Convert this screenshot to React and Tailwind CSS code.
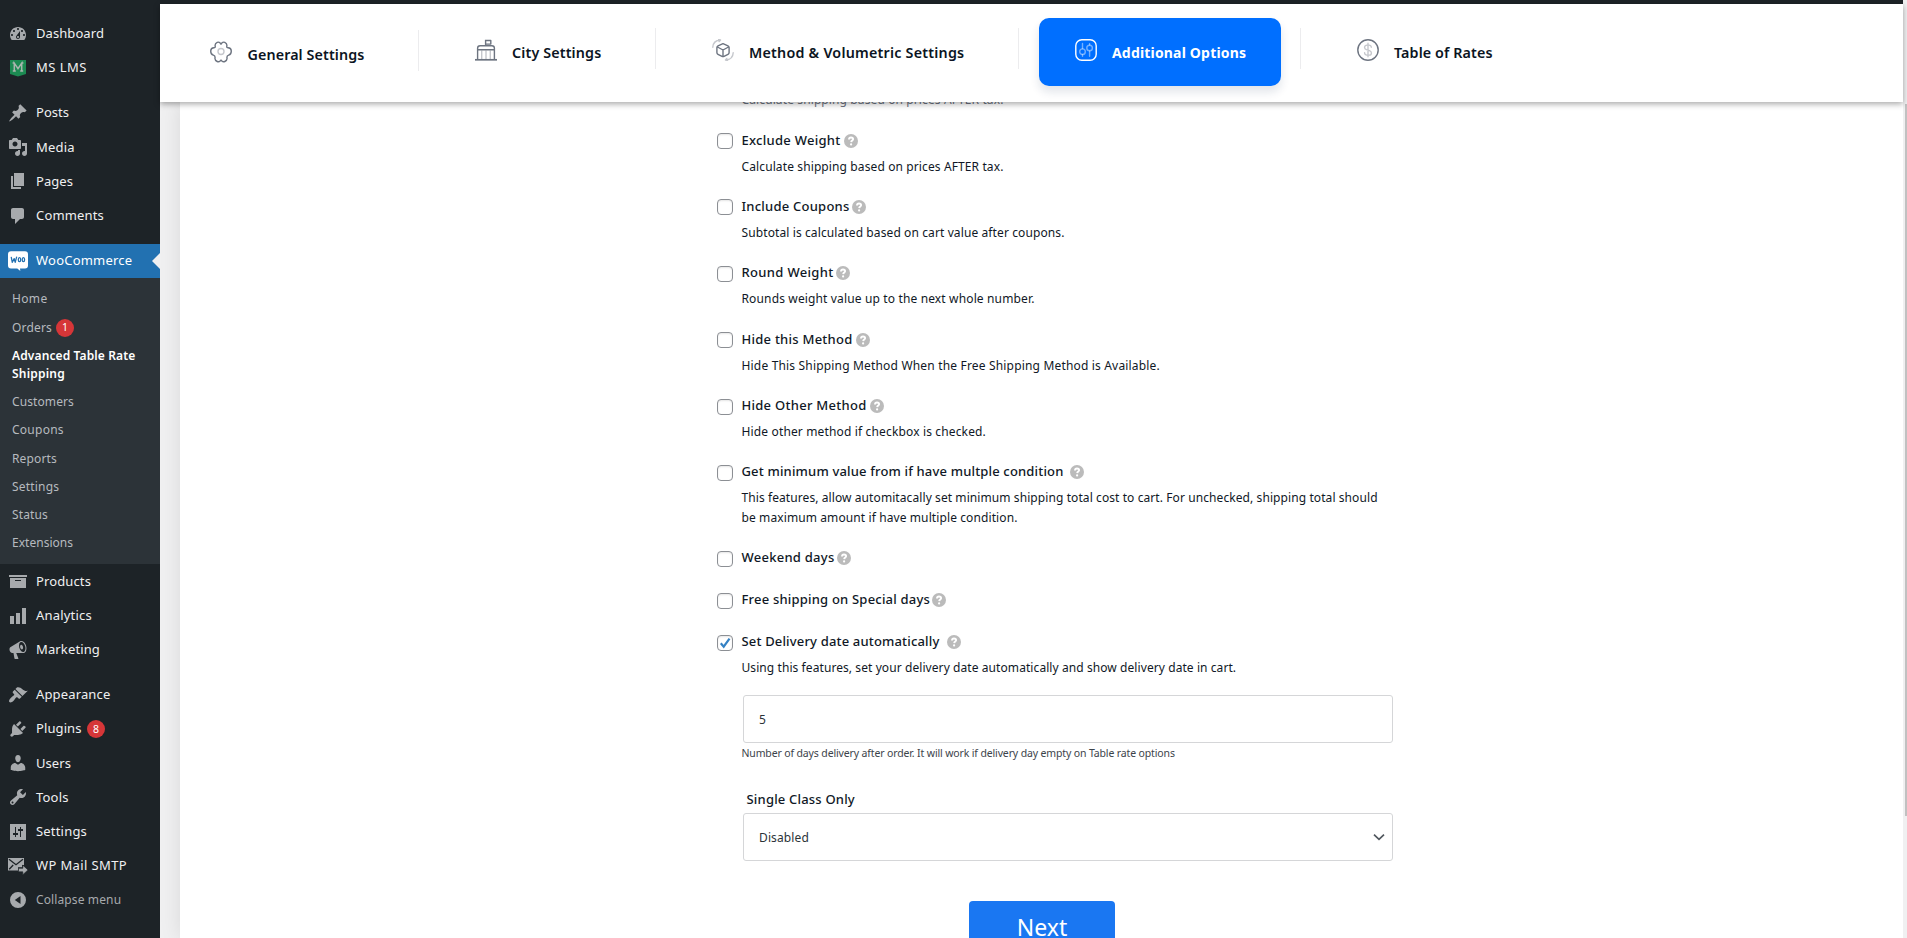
import React from "react";

const ICONS = {
  dashboard: "M3.76 16h12.48c1.1-1.37 1.76-3.11 1.76-5 0-4.42-3.58-8-8-8s-8 3.58-8 8c0 1.89.66 3.63 1.76 5zM10 4c.55 0 1 .45 1 1s-.45 1-1 1-1-.45-1-1 .45-1 1-1zM6 6c.55 0 1 .45 1 1s-.45 1-1 1-1-.45-1-1 .45-1 1-1zm8 0c.55 0 1 .45 1 1s-.45 1-1 1-1-.45-1-1 .45-1 1-1zm-5.37 5.55L12 7v6c0 1.1-.9 2-2 2s-2-.9-2-2c0-.57.24-1.08.63-1.45zM4 10c.55 0 1 .45 1 1s-.45 1-1 1-1-.45-1-1 .45-1 1-1zm12 0c.55 0 1 .45 1 1s-.45 1-1 1-1-.45-1-1 .45-1 1-1zm-5 3c0-.55-.45-1-1-1s-1 .45-1 1 .45 1 1 1 1-.45 1-1z",
  post: "M10.44 3.02l1.82-1.82 6.36 6.35-1.83 1.82c-1.05-.68-2.48-.57-3.41.36l-.75.75c-.92.93-1.04 2.35-.35 3.41l-1.83 1.82-2.41-2.41-2.8 2.79c-.42.42-3.38 2.71-3.8 2.29s1.86-3.39 2.28-3.81l2.79-2.79L4.1 9.36l1.83-1.82c1.05.69 2.48.57 3.4-.36l.75-.75c.93-.92 1.05-2.35.36-3.41z",
  media: "M13 11V4c0-.55-.45-1-1-1h-1.67L9 1H5L3.67 3H2c-.55 0-1 .45-1 1v7c0 .55.45 1 1 1h10c.55 0 1-.45 1-1zM7 4.5c1.38 0 2.5 1.12 2.5 2.5S8.38 9.5 7 9.5 4.5 8.38 4.5 7 5.62 4.5 7 4.5zM14 6h5v10.5c0 1.38-1.12 2.5-2.5 2.5S14 17.88 14 16.5s1.12-2.5 2.5-2.5c.17 0 .34.02.5.05V9h-3V6zm-4 8.05V13h2v3.5c0 1.38-1.12 2.5-2.5 2.5S7 17.88 7 16.5 8.12 14 9.5 14c.17 0 .34.02.5.05z",
  page: "M6 15V2h10v13H6zm-1 1h8v2H3V5h2v11z",
  comments: "M5 2h9c1.1 0 2 .9 2 2v7c0 1.1-.9 2-2 2h-2l-5 5v-5H5c-1.1 0-2-.9-2-2V4c0-1.1.9-2 2-2z",
  archive: "M19 4v2H1V4h18zM2 7h16v10H2V7zm11 3V9H7v1h6z",
  chart: "M18 18V2h-4v16h4zm-6 0V7H8v11h4zm-6 0v-8H2v8h4z",
  megaphone: "M18.15 5.94c.46 1.62.38 3.22-.02 4.48-.42 1.28-1.26 2.18-2.3 2.48-.16.06-.26.06-.4.06-.06.02-.12.02-.18.02-.06.02-.14.02-.22.02h-6.8l2.22 5.5c.02.14-.06.26-.14.34-.08.1-.24.16-.34.16H6.95c-.1 0-.26-.06-.34-.16-.08-.08-.16-.2-.14-.34l-1-5.5H4.25l-.02-.02c-.5.06-1.08-.18-1.54-.62s-.88-1.08-1.06-1.88c-.24-.8-.2-1.56-.02-2.2.18-.62.58-1.08 1.06-1.3l.02-.02 9-5.4c.1-.06.18-.1.24-.16.06-.04.14-.08.24-.12.16-.08.28-.12.5-.18 1.04-.3 2.24.1 3.22.98s1.84 2.24 2.26 3.86zm-2.58 5.98h-.02c.4-.1.74-.34 1.04-.7.58-.7.86-1.76.86-3.04 0-.64-.1-1.3-.28-1.98-.34-1.36-1.02-2.5-1.78-3.24s-1.68-1.1-2.46-.88c-.82.22-1.4.96-1.7 2-.32 1.04-.28 2.36.06 3.72.38 1.36 1 2.5 1.8 3.24.78.74 1.62 1.1 2.48.88zm-2.54-7.08c.22-.04.42-.02.62.04.38.16.76.48 1.02 1s.42 1.2.42 1.78c0 .3-.04.56-.12.8-.18.48-.44.84-.86.94-.34.1-.8-.06-1.14-.4s-.64-.86-.78-1.5c-.18-.62-.12-1.24.02-1.72s.48-.84.82-.94z",
  appearance: "M14.48 11.06L7.41 3.99l1.5-1.5c.5-.56 2.3-.47 3.51.32 1.21.8 1.43 1.28 2.91 2.1 1.18.64 2.45 1.26 4.45.85zm-.71.71L6.7 4.7 4.93 6.47c-.39.39-.39 1.02 0 1.41l1.06 1.06c.39.39.39 1.03 0 1.42-.6.6-1.43 1.11-2.21 1.69-.35.26-.7.53-1.01.84C1.43 14.23.4 16.08 1.4 17.07c.99 1 2.84-.03 4.18-1.36.31-.31.58-.66.85-1.02.57-.78 1.08-1.61 1.69-2.21.39-.39 1.02-.39 1.41 0l1.06 1.06c.39.39 1.02.39 1.41 0z",
  plugins: "M13.11 4.36L9.87 7.6 8 5.73l3.24-3.24c.35-.34 1.05-.2 1.56.32.52.51.66 1.21.31 1.55zm-8 1.77l.91-1.12 9.01 9.01-1.19.84c-.71.71-2.63 1.16-3.82 1.16H6.14L4.9 17.26c-.59.59-1.54.59-2.12 0-.59-.58-.59-1.53 0-2.12l1.24-1.24v-3.88c0-1.13.4-3.19 1.09-3.89zm7.26 3.97l3.24-3.24c.34-.35 1.04-.21 1.55.31.52.51.66 1.21.31 1.55l-3.24 3.25z",
  users: "M10 9.25c-2.27 0-2.73-3.44-2.73-3.44C7 4.02 7.82 2 9.97 2c2.16 0 2.98 2.02 2.71 3.81 0 0-.41 3.44-2.68 3.44zm0 2.57L12.72 10c2.39 0 4.52 2.33 4.52 4.53v2.49s-3.65 1.13-7.24 1.13c-3.65 0-7.24-1.13-7.24-1.13v-2.49c0-2.25 1.94-4.48 4.47-4.48z",
  tools: "M16.68 9.77c-1.34 1.34-3.3 1.67-4.95.99l-5.41 6.52c-.99.99-2.59.99-3.58 0s-.99-2.59 0-3.57l6.52-5.42c-.68-1.65-.35-3.61.99-4.95 1.28-1.28 3.12-1.62 4.72-1.06l-2.89 2.89 2.82 2.82 2.86-2.87c.53 1.58.18 3.39-1.08 4.65zM3.81 16.21c.4.39 1.04.39 1.43 0 .4-.4.4-1.04 0-1.43-.39-.4-1.03-.4-1.43 0-.39.39-.39 1.03 0 1.43z",
  settings: "M2 2h16v16H2zM8 11V5H7v6H5v2h2v2h1v-2h2v-2zM15 7h-2V5h-1v2h-2v2h2v6h1V9h2z",
  collapse: "M10 2a8 8 0 1 0 0 16 8 8 0 0 0 0-16zM12.5 6v8L6.8 10z",
};

function Dashicon({ name }) {
  if (name === "mslms") {
    return (
      <svg className="size-5" viewBox="0 0 20 20">
        <path fill="#1c8a52" d="M2 2h16v14l-8 2.6L2 16z" />
        <path fill="none" stroke="#a9b5ae" strokeWidth="1.5" d="M6.3 13V5.2L10 10.6l3.7-5.4V13M4.6 5h2.2M13.2 5h2.2M4.8 13h3M12.2 13h3" />
      </svg>
    );
  }
  if (name === "woo") {
    return (
      <svg className="size-5" viewBox="0 0 20 20">
        <path fill="#fff" d="M3 .2h14a3 3 0 0 1 3 3v11.4a3 3 0 0 1-3 3h-5l.3 2.4-3-2.4H3a3 3 0 0 1-3-3V3.200a3 3 0 0 1 3-3z" />
        <path fill="none" stroke="#2271b1" strokeWidth="1.3" strokeLinecap="round" strokeLinejoin="round" d="M3.300 6.400l1 4.900 1.900-3.700 1 3.700L8.600 6.200" />
        <ellipse cx="11.500" cy="8.700" rx="1.200" ry="2" fill="none" stroke="#2271b1" strokeWidth="1.300" />
        <ellipse cx="15.400" cy="8.700" rx="1.200" ry="2" fill="none" stroke="#2271b1" strokeWidth="1.300" />
      </svg>
    );
  }
  if (name === "mail") {
    return (
      <svg className="size-5" viewBox="0 0 20 20">
        <path fill="#a7aaad" d="M0 2h16v7h-2v2.300h-4v3.200H0z" />
        <path fill="none" stroke="#1d2327" strokeWidth="1.300" d="M1 3.300l7 5.400 7-5.400M1.200 13.300l4-4.300" />
        <path fill="#a7aaad" stroke="#1d2327" strokeWidth=".6" d="M10.500 12.300h4.300V9.200l5.200 4.700-5.200 4.800v-2.900h-4.300z" />
      </svg>
    );
  }
  return (
    <svg className="size-5" viewBox="0 0 20 20">
      <path fill="#a7aaad" fillRule={name === "settings" || name === "collapse" ? "evenodd" : "nonzero"} d={ICONS[name]} />
    </svg>
  );
}

const TOP = [
  ["dashboard", "Dashboard", "tracking-[0.076px]"],
  ["mslms", "MS LMS", "tracking-[0.45px]"],
  null,
  ["post", "Posts", "tracking-[0.02px]"],
  ["media", "Media", "tracking-[0.2px]"],
  ["page", "Pages", "tracking-[0.05px]"],
  ["comments", "Comments", "tracking-[0.16px]"],
  null,
];
const SUB = [
  ["Customers", "tracking-[0.1px]"],
  ["Coupons", "tracking-[0.25px]"],
  ["Reports", "tracking-[0.15px]"],
  ["Settings", "tracking-[0.2px]"],
  ["Status", "tracking-[0.14px]"],
  ["Extensions", "tracking-[0.02px]"],
];
const BOTTOM = [
  ["archive", "Products", "tracking-[0.12px]"],
  ["chart", "Analytics", "tracking-[0.2px]"],
  ["megaphone", "Marketing", "tracking-[0.13px]"],
  null,
  ["appearance", "Appearance", "tracking-[0.15px]"],
  ["plugins", "Plugins", "tracking-[0.1px]", "8"],
  ["users", "Users", "tracking-[0.06px]"],
  ["tools", "Tools", "tracking-[0.2px]"],
  ["settings", "Settings", "tracking-[0.19px]"],
  ["mail", "WP Mail SMTP", "tracking-[0.37px]"],
];

function Badge({ children }) {
  return <span className="flex size-[18px] items-center justify-center rounded-full bg-[#d63638] text-[10.5px] leading-none text-white">{children}</span>;
}

function MenuList({ items }) {
  return items.map((it, i) =>
    it ? (
      <div key={i} className="flex h-[34.2px] items-center pl-2 text-[13px] text-[#f0f0f1]">
        <Dashicon name={it[0]} />
        <span className={"ml-2 " + it[2]}>{it[1]}</span>
        {it[3] && <span className="ml-[5.5px]"><Badge>{it[3]}</Badge></span>}
      </div>
    ) : (
      <div key={i} className="h-[11px]" />
    )
  );
}

function Sidebar() {
  return (
    <nav className="h-full w-40 shrink-0 bg-[#1d2327] pt-[16.6px]">
      <MenuList items={TOP} />
      <div className="relative flex h-[34.2px] items-center bg-[#2271b1] pl-2 text-[13px] text-white">
        <Dashicon name="woo" />
        <span className="ml-2 tracking-[0.22px]">WooCommerce</span>
        <span className="absolute right-0 top-[9px] border-y-8 border-r-8 border-y-transparent border-r-[#f0f0f1]" />
      </div>
      <div className="bg-[#2c3338] pb-[7px] pl-3 pt-[7px] text-[12px] text-[#b6babf]">
        <div className="flex h-[28.2px] items-center tracking-[0.35px]">Home</div>
        <div className="flex h-[29px] items-center">
          <span className="mr-[4px] tracking-[0.17px]">Orders</span>
          <Badge>1</Badge>
        </div>
        <div className="h-[46px] py-[4.6px] font-semibold leading-[18.2px] text-white">
          <div className="tracking-[0.12px]">Advanced Table Rate</div>
          <div className="tracking-[0.2px]">Shipping</div>
        </div>
        {SUB.map(([t, k]) => (
          <div key={t} className={"flex h-[28.2px] items-center " + k}>{t}</div>
        ))}
      </div>
      <MenuList items={BOTTOM} />
      <div className="flex h-[34.2px] items-center pl-2 text-[12px] text-[#a7aaad]">
        <Dashicon name="collapse" />
        <span className="ml-2 tracking-[0.12px]">Collapse menu</span>
      </div>
    </nav>
  );
}

const stroke = { fill: "none", stroke: "currentColor", strokeWidth: 1.4, strokeLinecap: "round", strokeLinejoin: "round" };
function GearIcon() {
  return (
    <svg className="size-[22px] text-[#6d7480]" viewBox="0 0 22 22" {...stroke}>
      <path d="M11 3.200C12 1.200 13.200.7 14.800 1.400c2 .9 2.400 1.800 2 3.800-.2 1 .3 1.600 1.300 1.600 2.200.1 3.100 1 3.200 3.200 0 2.600-.6 3.600-2.600 4.200-1.600.5-2 1.200-1.700 2.700.3 1.700-.3 2.700-2.200 3.600-1.600.8-2.700.3-3.800-1.500-1.100 1.800-2.200 2.300-3.800 1.500-1.900-.9-2.500-1.900-2.200-3.600.3-1.500-.1-2.200-1.700-2.700C1.300 13.600.7 12.600.7 10c.1-2.200 1-3.100 3.200-3.200 1 0 1.500-.6 1.300-1.600-.4-2 0-2.900 2-3.800C8.800.7 10 1.200 11 3.200z" />
      <circle cx="11" cy="10.500" r="3" opacity=".4" />
    </svg>
  );
}
function CityIcon() {
  return (
    <svg className="size-[22px] text-[#6d7480]" viewBox="0 0 22 22" {...stroke} strokeLinecap="butt">
      <path d="M10.600 7V.8M10.600 1.500h5.200v3.600h-5.200" />
      <path d="M2.600 20.500V9.300c0-1.700.9-2.500 2.500-2.500h11.800c1.600 0 2.500.8 2.500 2.500v11.200M2.600 10.800h16.800" />
      <path d="M0 20.800h22" strokeWidth="1.700" />
      <path d="M6.700 11.500v9M11 11.500v9M15.300 11.500v9" opacity=".4" />
    </svg>
  );
}
function CubeIcon() {
  return (
    <svg className="size-[22px] text-[#6d7480]" viewBox="0 0 22 22" {...stroke}>
      <path d="M11 4.600l5 2.200c.9.4 1.100.9 1.100 1.800v4.800c0 .9-.3 1.500-1.100 1.900l-4 2c-.8.4-1.300.4-2 0l-4-2c-.8-.4-1.100-1-1.100-1.900V8.600c0-.9.200-1.400 1.100-1.800zM5.500 8l5.500 3 5.500-3M11 11v6.300" />
      <path d="M.8 8.300C1 4 3.800 1.300 8.300 1M6.600.5L8.500 1 7.200 2.600M21.200 13.800c-.2 4.200-3 7-7.500 7.200M15.400 21.500l-1.900-.5 1.300-1.600" opacity=".4" />
    </svg>
  );
}
function SlidersIcon() {
  return (
    <svg className="size-[22px] text-white" viewBox="0 0 22 22" {...stroke}>
      <rect x=".8" y=".8" width="20.400" height="20.400" rx="6" />
      <path d="M7.500 4.500v5M7.500 15.700v1.500M14.600 4.800v1M14.600 12.300v5" opacity=".45" />
      <circle cx="7.500" cy="12.700" r="2.800" opacity=".45" />
      <circle cx="14.600" cy="9" r="2.800" opacity=".45" />
    </svg>
  );
}
function DollarIcon() {
  return (
    <svg className="size-[22px] text-[#6d7480]" viewBox="0 0 22 22" {...stroke}>
      <circle cx="11" cy="11" r="10.200" />
      <path d="M14.300 8.300c0-1.400-1-2.200-2.300-2.200h-2c-1.400 0-2.400 1-2.400 2.300 0 1.400.8 1.900 1.900 2.300l3 .9c1.200.4 1.900 1 1.900 2.300s-1 2.200-2.300 2.200H10c-1.400 0-2.400-.9-2.400-2.300M11 4.300v13.400" opacity=".4" />
    </svg>
  );
}

function Header() {
  const text = "whitespace-nowrap font-semibold text-[#0b1422] text-[14.3px] leading-[21px]";
  const divider = "w-px h-[41px] bg-[#ececee] shrink-0";
  return (
    <header className="relative z-10 flex h-[98px] bg-white shadow-[0_2px_6px_rgba(0,0,0,0.35)]">
      <div className="mt-[26px] flex h-[41px] w-[258px] pl-[50px]">
        <div className="mt-[11px]"><GearIcon /></div>
        <span className={text + " ml-[15.5px] mt-[13.5px] tracking-[0.1px]"}>General Settings</span>
      </div>
      <div className={divider + " mt-[26px]"} />
      <div className="mt-[24px] flex h-[41px] w-[236px] pl-[56px]">
        <div className="mt-[11px]"><CityIcon /></div>
        <span className={text + " ml-[15px] mt-[14px] tracking-[0.14px]"}>City Settings</span>
      </div>
      <div className={divider + " mt-[24px]"} />
      <div className="mt-[24px] flex h-[41px] w-[362px] pl-[56px]">
        <div className="mt-[11px]"><CubeIcon /></div>
        <span className={text + " ml-[15px] mt-[14px] tracking-[0.22px]"}>Method &amp; Volumetric Settings</span>
      </div>
      <div className={divider + " mt-[24px]"} />
      <div className="ml-[20px] mt-[14px] flex h-[68px] w-[242px] rounded-[10px] bg-[#006fff] pl-[36px] shadow-[0_6px_10px_rgba(15,40,80,0.12)]">
        <div className="mt-[21px]"><SlidersIcon /></div>
        <span className="ml-[15px] mt-[24px] whitespace-nowrap text-[14px] font-bold leading-[21px] tracking-[0.18px] text-white">Additional Options</span>
      </div>
      <div className={divider + " ml-[19px] mt-[24px]"} />
      <div className="mt-[24px] flex h-[41px] pl-[56px]">
        <div className="mt-[11px]"><DollarIcon /></div>
        <span className={text + " ml-[15px] mt-[14px] tracking-[0.11px]"}>Table of Rates</span>
      </div>
    </header>
  );
}

function Help({ className }) {
  return (
    <svg className={"size-[14px] " + className} viewBox="0 0 14 14">
      <circle cx="7" cy="7" r="7" fill="#bbb" />
      <path d="M5 5.500C5 4.100 5.900 3.500 7 3.500s2.100.6 2.100 1.700c0 1.400-1.800 1.400-1.900 2.900" fill="none" stroke="#fff" strokeWidth="1.900" />
      <circle cx="7.100" cy="10.400" r="1.100" fill="#fff" />
    </svg>
  );
}

const ROWS = [
  { label: "Exclude Weight", lt: "tracking-[0.277px]", gap: "ml-[3px]", h: "h-[66.4px]", desc: [["Calculate shipping based on prices AFTER tax.", "tracking-[0.114px]"]] },
  { label: "Include Coupons", lt: "tracking-[0.231px]", gap: "ml-[2px]", h: "h-[66.4px]", desc: [["Subtotal is calculated based on cart value after coupons.", "tracking-[0.106px]"]] },
  { label: "Round Weight", lt: "tracking-[0.329px]", gap: "ml-[3px]", h: "h-[66.4px]", desc: [["Rounds weight value up to the next whole number.", "tracking-[0.143px]"]] },
  { label: "Hide this Method", lt: "tracking-[0.249px]", gap: "ml-[3px]", h: "h-[66.4px]", desc: [["Hide This Shipping Method When the Free Shipping Method is Available.", "tracking-[0.175px]"]] },
  { label: "Hide Other Method", lt: "tracking-[0.275px]", gap: "ml-[3px]", h: "h-[66.4px]", desc: [["Hide other method if checkbox is checked.", "tracking-[0.149px]"]] },
  { label: "Get minimum value from if have multple condition", lt: "tracking-[0.166px]", gap: "ml-[7px]", h: "h-[86px]", desc: [["This features, allow automitacally set minimum shipping total cost to cart. For unchecked, shipping total should", "tracking-[0.086px]"], ["be maximum amount if have multiple condition.", "tracking-[0.103px]"]] },
  { label: "Weekend days", lt: "tracking-[0.258px]", gap: "ml-[2px]", h: "h-[42px]", desc: [] },
  { label: "Free shipping on Special days", lt: "tracking-[0.202px]", gap: "ml-[2px]", h: "h-[42px]", desc: [] },
  { label: "Set Delivery date automatically", lt: "tracking-[0.168px]", gap: "ml-[7px]", h: "h-[64px]", checked: true, desc: [["Using this features, set your delivery date automatically and show delivery date in cart.", "tracking-[0.080px]"]] },
];

function OptionRow({ row }) {
  return (
    <div className={"flex items-start " + row.h}>
      <span className="mt-1 flex size-4 shrink-0 items-center justify-center rounded-[4px] border border-[#8c8f94] bg-white shadow-[inset_0_1px_2px_rgba(0,0,0,0.1)]">
        {row.checked && (
          <svg className="size-[14px]" viewBox="0 0 14 14">
            <path d="M2.800 7.300l2.900 3.400L11.500 2.600" fill="none" stroke="#3582c4" strokeWidth="2.200" />
          </svg>
        )}
      </span>
      <div className="ml-[8.500px] pt-[0.500px]">
        <div className="flex h-[21px] items-center text-[13px] font-medium leading-[21px] text-[#101826]">
          <span className={"whitespace-nowrap " + row.lt}>{row.label}</span>
          <Help className={row.gap + " mt-px"} />
        </div>
        <div className="mt-[6px] text-[12px] leading-[19.500px] text-[#101826]">
          {row.desc.map(([t, k]) => (
            <div key={t} className={"whitespace-nowrap " + k}>{t}</div>
          ))}
        </div>
      </div>
    </div>
  );
}

export default function App() {
  return (
    <div className="flex h-[938px] w-[1907px] overflow-hidden bg-[#f0f0f1] font-['Noto_Sans','Open_Sans',sans-serif]">
      <Sidebar />
      <div className="flex h-full w-[1743px] flex-col">
        <div className="h-1 shrink-0 bg-[#1d2327]" />
        <Header />
        <main className="h-[836px] overflow-hidden pl-5">
          <div className="h-full bg-white pl-[537px] shadow-[0_0_20px_rgba(0,0,0,0.1)]">
            <div className="flex w-[676px] flex-col">
              <div className="-mt-[12.500px] ml-[24.500px] h-[39.500px] whitespace-nowrap text-[12px] leading-[19.500px] tracking-[0.114px] text-[#6b7280]">Calculate shipping based on prices AFTER tax.</div>
              <div>
                {ROWS.map((r) => (
                  <OptionRow key={r.label} row={r} />
                ))}
              </div>
              <div className="ml-[26px] flex h-12 items-center rounded-[3px] border border-[#d5d6d8] pl-[15px] pt-[3px] text-[12px] text-[#2c3338]">5</div>
              <div className="ml-[24.500px] mt-px h-[18px] whitespace-nowrap text-[10.500px] leading-[18px] tracking-[-0.138px] text-[#3c434a]">Number of days delivery after order. It will work if delivery day empty on Table rate options</div>
              <div className="ml-[29.500px] mt-[27.500px] h-[23.500px] text-[13px] font-medium leading-[21px] tracking-[0.19px] text-[#101826]">Single Class Only</div>
              <div className="ml-[26px] flex h-12 items-center justify-between rounded-[3px] border border-[#d5d6d8] pl-[15px] pr-[7px] text-[12px] text-[#2c3338]">
                <span className="mt-[3px] tracking-[0.12px]">Disabled</span>
                <svg className="size-[12px]" viewBox="0 0 12 12">
                  <path d="M1 3.700L6 8.300l5-4.600" fill="none" stroke="#50575e" strokeWidth="1.700" />
                </svg>
              </div>
              <button className="ml-[252px] mt-10 h-[52px] w-[146px] rounded-[4px] bg-[#1a77f2] text-[23px] leading-[52px] text-white">Next</button>
            </div>
          </div>
        </main>
      </div>
      <div className="flex h-full w-1 flex-col items-end bg-[#f0f0f1] pt-[104px]">
        <div className="h-[712px] w-[2px] bg-[#c1c1c1]" />
      </div>
    </div>
  );
}
